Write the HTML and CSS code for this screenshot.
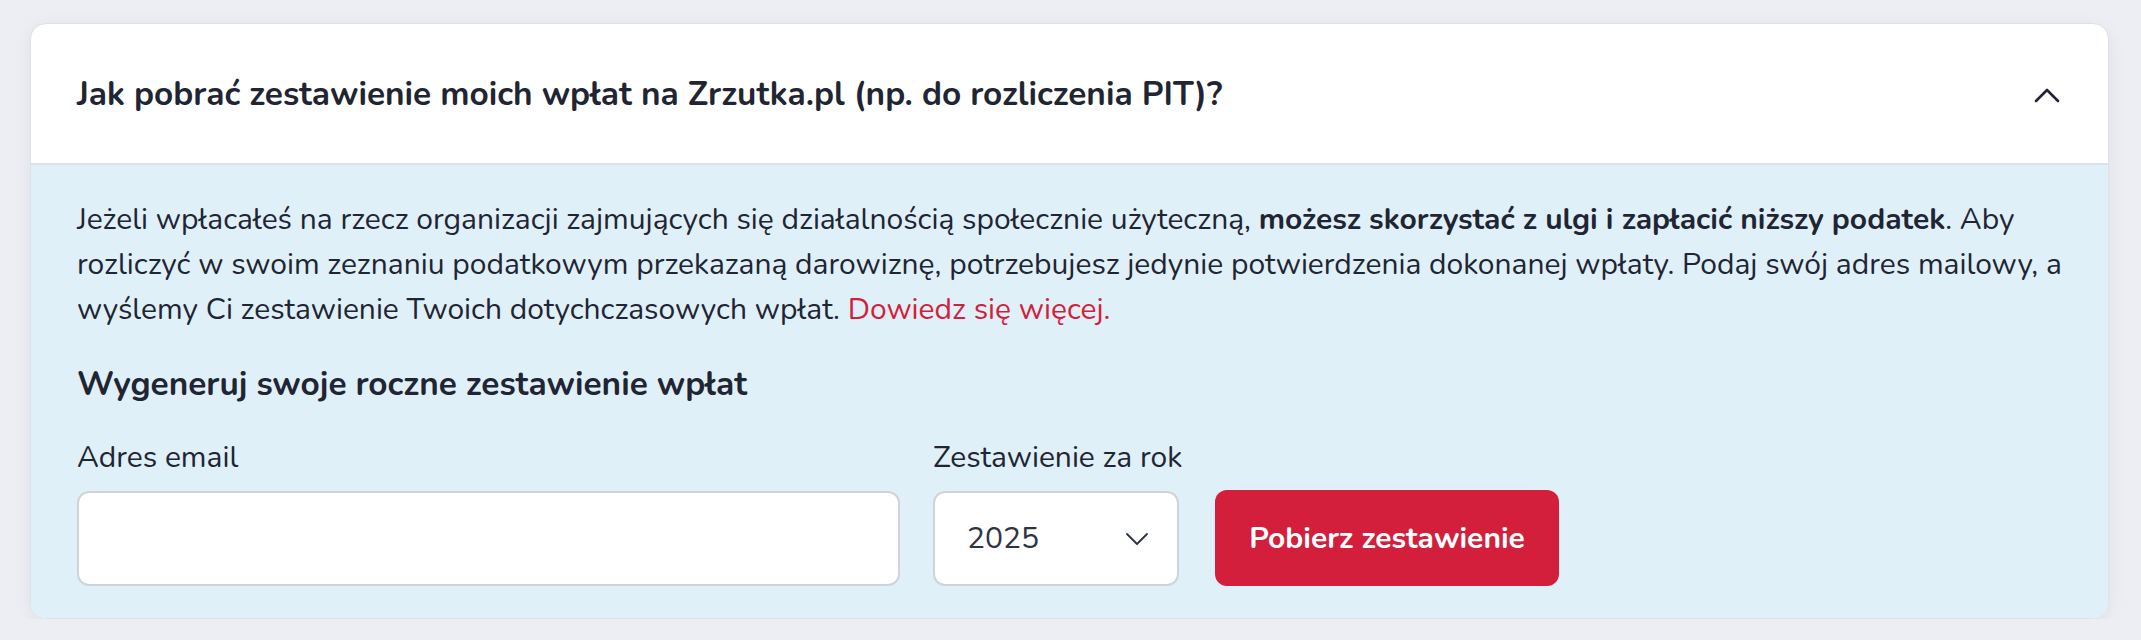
FILE: index.html
```html
<!DOCTYPE html>
<html lang="pl">
<head>
<meta charset="utf-8">
<title>Zestawienie wpłat</title>
<link rel="stylesheet" href="styles.css">
</head>
<body>
<section class="faq-card">
  <header class="faq-head">
    <h2 class="faq-title">Jak pobrać zestawienie moich wpłat na Zrzutka.pl (np. do rozliczenia PIT)?</h2>
    <svg class="chev-up" width="28" height="16" viewBox="0 0 28 16" aria-hidden="true">
      <path d="M3 14 L14 3 L25 14" fill="none" stroke="#1f2533" stroke-width="2.6" stroke-linecap="round" stroke-linejoin="round"/>
    </svg>
  </header>
  <div class="faq-body">
    <p class="intro">Jeżeli wpłacałeś na rzecz organizacji zajmujących się działalnością społecznie użyteczną, <strong>możesz skorzystać z ulgi i zapłacić niższy podatek</strong>. Aby rozliczyć w swoim zeznaniu podatkowym przekazaną darowiznę, potrzebujesz jedynie potwierdzenia dokonanej wpłaty. Podaj swój adres mailowy, a wyślemy Ci zestawienie Twoich dotychczasowych wpłat. <a class="more" href="#">Dowiedz się więcej.</a></p>
    <h3 class="sub">Wygeneruj swoje roczne zestawienie wpłat</h3>
    <form class="gen-form">
      <label class="field field-email">
        <span class="lbl">Adres email</span>
        <span class="control"></span>
      </label>
      <label class="field field-year">
        <span class="lbl">Zestawienie za rok</span>
        <span class="control select">
          <span class="year">2025</span>
          <svg class="chev-down" width="24" height="14" viewBox="0 0 24 14" aria-hidden="true">
            <path d="M2 2 L12 12 L22 2" fill="none" stroke="#2b3140" stroke-width="1.8" stroke-linecap="round" stroke-linejoin="round"/>
          </svg>
        </span>
      </label>
      <button type="button" class="btn">Pobierz zestawienie</button>
    </form>
  </div>
</section>
</body>
</html>
```

FILE: styles.css
```css
* { box-sizing: border-box; }
html, body { margin: 0; padding: 0; }
body {
  background: #eceef3;
  font-family: "Nunito", "Lato", "Noto Sans", sans-serif;
  color: #1f2533;
  padding: 23px 32px 0 30px;
}
.faq-card {
  background: #ffffff;
  border-radius: 16px;
  border: 1px solid #dde2ea;
  overflow: hidden;
  box-shadow: 0 4px 18px rgba(30, 40, 70, 0.06);
}
.faq-head {
  display: flex;
  align-items: center;
  justify-content: space-between;
  height: 141px;
  padding: 0 47px 0 46px;
  border-bottom: 2px solid #dde2ea;
}
.faq-title {
  margin: 0;
  font-size: 33.4px;
  font-weight: 700;
}
.chev-up { margin-top: 2px; }
.faq-body {
  background: #e0f0f9;
  padding: 32px 44px 32px 46px;
}
.intro {
  margin: 0;
  font-size: 30px;
  line-height: 45px;
}
.intro strong { font-weight: 700; }
.more { color: #d41f3c; text-decoration: none; }
.sub {
  margin: 31px 0 0;
  font-size: 33.4px;
  line-height: 42px;
  font-weight: 700;
}
.gen-form {
  display: flex;
  align-items: flex-end;
  gap: 33px;
  margin-top: 34px;
}
.field {
  display: flex;
  flex-direction: column;
  gap: 14px;
}
.lbl {
  font-size: 30px;
  line-height: 38px;
}
.control {
  display: block;
  height: 95px;
  background: #ffffff;
  border: 2px solid #cfd4da;
  border-radius: 12px;
}
.field-email .control { width: 823px; }
.field-year .control { width: 246px; }
.select {
  display: flex;
  align-items: center;
  justify-content: space-between;
  padding: 0 28px 0 32px;
}
.year {
  font-size: 30px;
  color: #2e3442;
}
.btn {
  height: 96px;
  padding: 0 34px;
  border: none;
  border-radius: 12px;
  background: #d31f3c;
  color: #ffffff;
  font-family: inherit;
  font-size: 30px;
  font-weight: 700;
  cursor: pointer;
}
```
